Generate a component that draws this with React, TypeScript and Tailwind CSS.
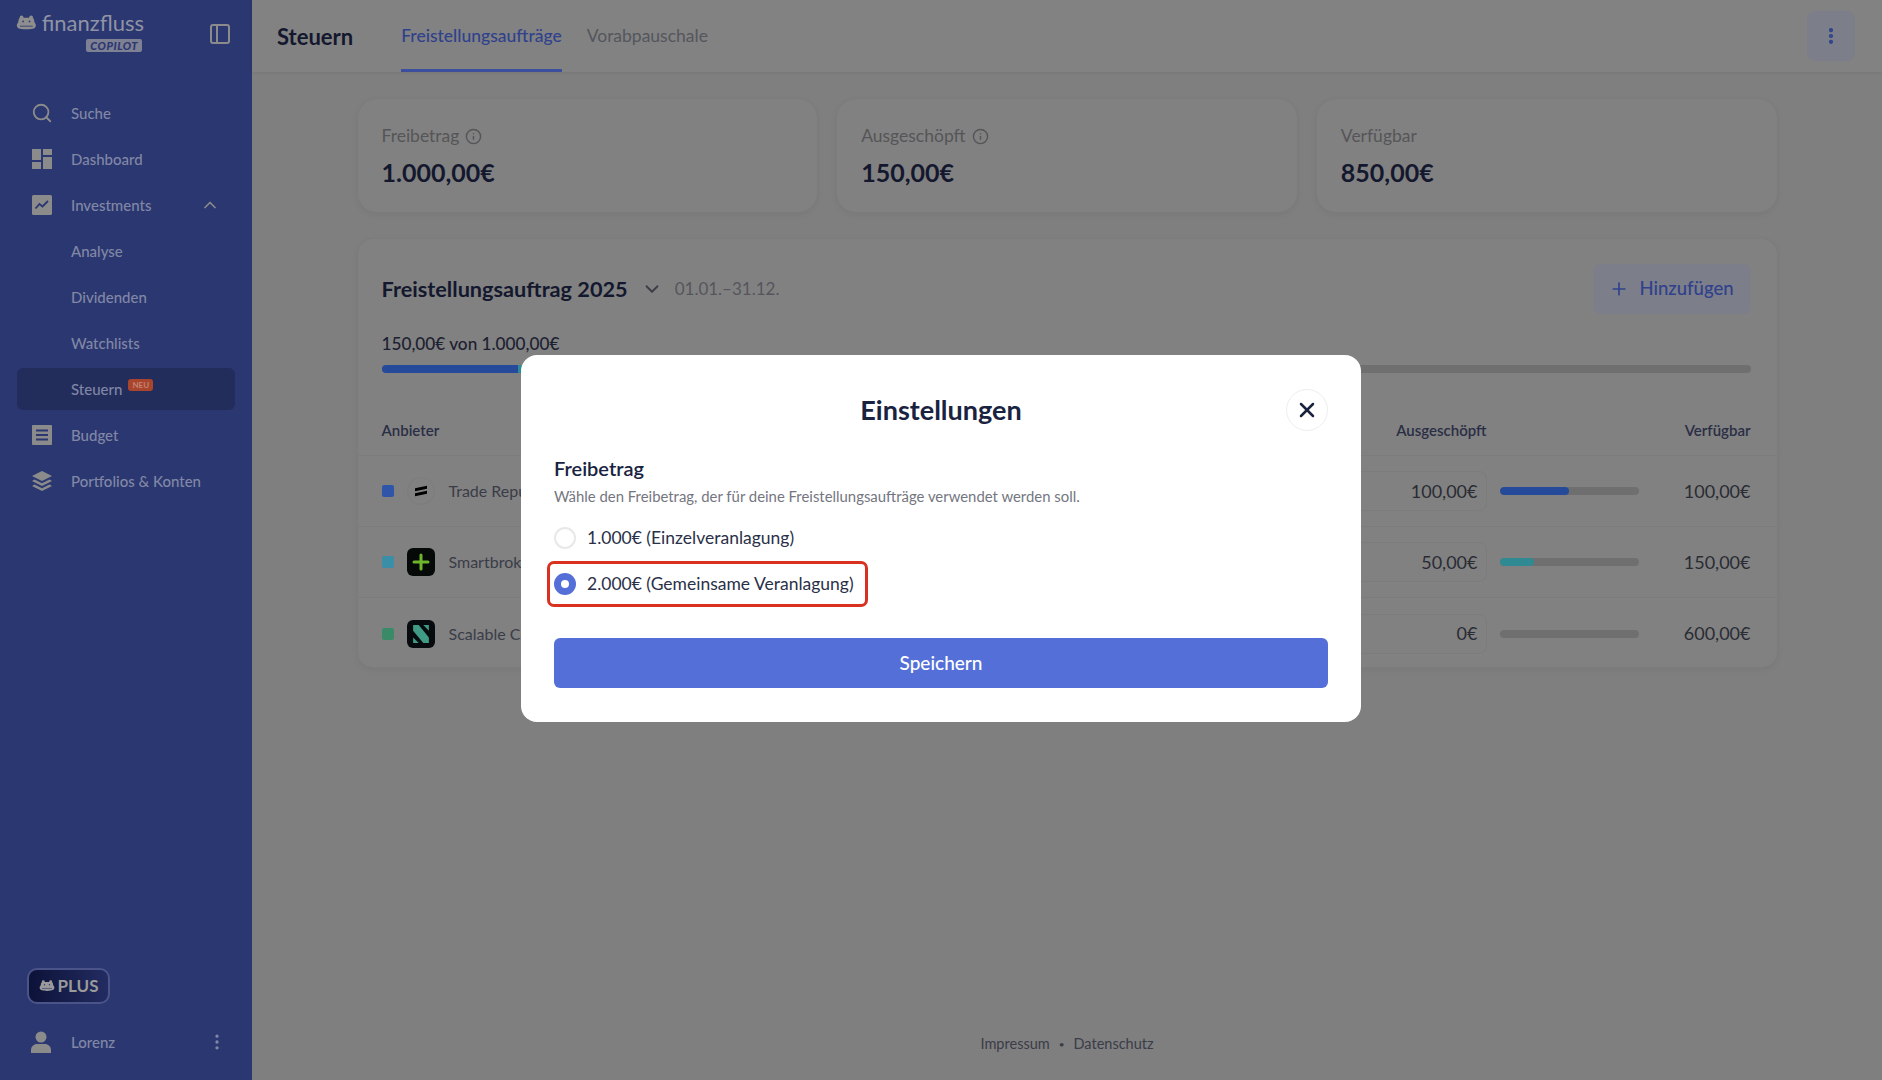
import { ChevronDown, ChevronUp, EllipsisVertical, Info, Plus, Search, X } from 'lucide-react'

const font = { fontFamily: 'Lato, "Noto Sans", sans-serif' }

function Hippo({ className }: { className?: string }) {
  return (
    <svg viewBox="0 0 26 20" className={className} fill="currentColor">
      <circle cx="7" cy="3" r="2.4" />
      <circle cx="19" cy="3" r="2.4" />
      <path d="M6 3.5h14c2 0 3 2 3 4.5 0 1.5 2 2.5 2 5 0 3-3 4.5-6 4.5-1 0-2 .5-6 .5s-5-.5-6-.5c-3 0-6-1.500-6-4.500 0-2.500 2-3.500 2-5C3 5.500 4 3.500 6 3.500z" />
      <circle cx="9" cy="8" r="1.100" fill="#2b3770" />
      <circle cx="17" cy="8" r="1.100" fill="#2b3770" />
      <path d="M5 14h16" stroke="#2b3770" strokeWidth="1" />
    </svg>
  )
}

function DashboardIcon() {
  return (
    <svg viewBox="0 0 20 20" className="w-5 h-5" fill="currentColor">
      <rect x="0" y="0" width="9" height="11" />
      <rect x="11" y="0" width="9" height="6" />
      <rect x="11" y="8" width="9" height="12" />
      <rect x="0" y="13" width="9" height="7" />
    </svg>
  )
}

function ChartIcon() {
  return (
    <svg viewBox="0 0 20 20" className="w-5 h-5">
      <rect width="20" height="20" rx="1.500" fill="currentColor" />
      <path d="M3.500 13.500l4-4.500 3 2.500 5.500-5.500" fill="none" stroke="#2b3770" strokeWidth="1.800" />
    </svg>
  )
}

function BudgetIcon() {
  return (
    <svg viewBox="0 0 20 20" className="w-5 h-5">
      <rect width="20" height="20" rx="1" fill="currentColor" />
      <path d="M4 5.500h12M4 10h12M4 14.500h12" stroke="#2b3770" strokeWidth="1.800" />
    </svg>
  )
}

function LayersIcon() {
  return (
    <svg viewBox="0 0 20 20" className="w-5 h-5" fill="currentColor">
      <path d="M10 0l10 5-10 5L0 5z" />
      <path d="M2.500 8.500L10 12.300l7.500-3.800L20 10l-10 5L0 10z" />
      <path d="M2.500 13.500L10 17.300l7.500-3.800L20 15l-10 5L0 15z" />
    </svg>
  )
}

function UserIcon() {
  return (
    <svg viewBox="0 0 20 22" className="w-5 h-[22px]" fill="currentColor">
      <circle cx="10" cy="6" r="5.500" />
      <path d="M0 22v-3c0-3.500 3-6 6-6h8c3 0 6 2.500 6 6v3z" />
    </svg>
  )
}

function NavItem({ icon, label, active, badge, trailing }: {
  icon?: React.ReactNode
  label: string
  active?: boolean
  badge?: boolean
  trailing?: React.ReactNode
}) {
  return (
    <div className={`flex items-center h-[42px] mb-1 rounded-md px-[15px] ${active ? 'bg-[#232d5c]' : ''}`}>
      <div className="w-[39px] flex justify-center pr-[19px] shrink-0 text-[#8b8b8b]">{icon}</div>
      <span className="text-[15px] font-medium text-[#8187a6]">{label}</span>
      {badge && (
        <span className="ml-[6px] -mt-[8px] rounded-[3px] bg-[#a8452c] px-1 text-[8px] font-bold leading-[12px] text-[#c48372]">NEU</span>
      )}
      {trailing && <div className="ml-auto text-[#8b8b8b]">{trailing}</div>}
    </div>
  )
}

function Sidebar() {
  return (
    <aside className="w-[252px] h-full shrink-0 bg-[#2b3770] flex flex-col">
      <div className="flex items-start h-[92px] pl-[16px] pr-[22px] pt-[11px]">
        <div className="w-[128px]">
          <div className="flex items-center gap-[5px] text-[#8e8e8e]">
            <Hippo className="w-[22px] h-[18px]" />
            <span className="text-[22px] leading-[24px] text-[#8f93a5]">finanzfluss</span>
          </div>
          <div className="flex justify-end mt-[4px] pr-[2px]">
            <span className="rounded-[2px] bg-[#7e8094] px-[4px] text-[11px] leading-[13px] font-black italic tracking-wider text-[#2b3770]">COPILOT</span>
          </div>
        </div>
        <div className="ml-auto mt-[13px] flex h-5 w-5 rounded-[3px] border-2 border-[#8b8b8b]">
          <div className="w-[6px] border-r-2 border-[#8b8b8b]" />
        </div>
      </div>
      <nav className="px-[17px]">
        <NavItem icon={<Search className="w-[22px] h-[22px] shrink-0" />} label="Suche" />
        <NavItem icon={<DashboardIcon />} label="Dashboard" />
        <NavItem icon={<ChartIcon />} label="Investments" trailing={<ChevronUp className="w-5 h-5" />} />
        <NavItem label="Analyse" />
        <NavItem label="Dividenden" />
        <NavItem label="Watchlists" />
        <NavItem label="Steuern" active badge />
        <NavItem icon={<BudgetIcon />} label="Budget" />
        <NavItem icon={<LayersIcon />} label="Portfolios & Konten" />
      </nav>
      <div className="mt-auto pl-[27px] pb-[24px]">
        <div className="flex items-center justify-center gap-[3px] h-[36px] w-[83px] rounded-[10px] border-2 border-[#4a5488] bg-gradient-to-r from-[#0c1238] to-[#232c62] text-[#9a9a9a]">
          <Hippo className="w-[16px] h-[14px]" />
          <span className="text-[17px] font-bold">PLUS</span>
        </div>
        <div className="flex items-center mt-[24px] h-[28px] pr-[25px]">
          <div className="w-[30px] flex justify-start pl-[4px] text-[#8b8b8b]"><UserIcon /></div>
          <span className="ml-[14px] text-[15px] font-medium text-[#8187a6]">Lorenz</span>
          <EllipsisVertical className="ml-auto w-5 h-5 text-[#8187a6]" />
        </div>
      </div>
    </aside>
  )
}

function StatCard({ label, value, info }: { label: string; value: string; info?: boolean }) {
  return (
    <div className="flex-1 h-[115px] rounded-[20px] bg-[#818181] border border-[#7c7c7c] shadow-[0_2px_6px_rgba(0,0,0,0.05)] px-[24px] pt-[27px]">
      <div className="flex items-center gap-[6px] text-[17.500px] leading-[20px] text-[#555558]">
        {label}
        {info && <Info className="w-[17px] h-[17px]" />}
      </div>
      <div className="mt-[11px] text-[25px] leading-[30px] font-bold text-[#14182e]">{value}</div>
    </div>
  )
}

function ProviderLogo({ kind }: { kind: string }) {
  if (kind === 'tr') {
    return (
      <div className="w-[28px] h-[28px] rounded-full border border-[#7c7c7c] flex items-center justify-center">
        <div className="w-[12px] h-[8px] flex flex-col justify-between">
          <div className="h-[3px] bg-black -skew-y-12" />
          <div className="h-[3px] bg-black -skew-y-12" />
        </div>
      </div>
    )
  }
  if (kind === 'sb') {
    return (
      <div className="w-[28px] h-[28px] rounded-[6px] bg-[#050a08] flex items-center justify-center">
        <Plus className="w-[24px] h-[24px] text-[#6fb52c]" strokeWidth={3} />
      </div>
    )
  }
  return (
    <div className="w-[28px] h-[28px] rounded-[6px] bg-[#070b0d] flex items-center justify-center">
      <svg viewBox="0 0 16 16" className="w-[18px] h-[18px]" fill="#3f9a86">
        <path d="M1 0h5l9 11v5h-5L1 5z" />
        <path d="M10 0h5v5zM1 11l5 5H1z" />
      </svg>
    </div>
  )
}

const rows = [
  { name: 'Trade Republic', color: 'bg-[#2f55a8]', logo: 'tr', value: '100,00€', left: '100,00€', fill: 'w-[50%] bg-[#254a9a]' },
  { name: 'Smartbroker+', color: 'bg-[#3a8ea8]', logo: 'sb', value: '50,00€', left: '150,00€', fill: 'w-[25%] bg-[#2f8a94]' },
  { name: 'Scalable Capital', color: 'bg-[#3a8a68]', logo: 'sc', value: '0€', left: '600,00€', fill: 'w-0' },
]

function Modal() {
  return (
    <div className="absolute inset-0 flex items-center justify-center pb-[3px]">
      <div className="w-[840px] h-[367px] rounded-[16px] bg-white px-[33px] pt-[35px]">
        <div className="relative flex items-center justify-center h-[40px]">
          <h2 className="text-[27px] font-bold text-[#19233f]">Einstellungen</h2>
          <button className="absolute right-0 top-[-1px] flex h-[42px] w-[42px] items-center justify-center rounded-full border border-[#eeeeee] text-[#19233f]">
            <X className="w-[24px] h-[24px]" strokeWidth={2.500} />
          </button>
        </div>
        <div className="mt-[26px] text-[20px] leading-[24px] font-semibold text-[#19233f]">Freibetrag</div>
        <p className="mt-[6px] text-[14.900px] leading-[20px] text-[#74767f]">
          Wähle den Freibetrag, der für deine Freistellungsaufträge verwendet werden soll.
        </p>
        <div className="mt-[20px] flex items-center h-[24px]">
          <span className="w-[22px] h-[22px] rounded-full border-2 border-[#e8e8e8]" />
          <span className="ml-[11px] text-[17.500px] text-[#2a3048]">1.000€ (Einzelveranlagung)</span>
        </div>
        <div className="relative mt-[22px] flex items-center h-[24px]">
          <span className="flex items-center justify-center w-[22px] h-[22px] rounded-full bg-[#5470d8]">
            <span className="w-[8px] h-[8px] rounded-full bg-white" />
          </span>
          <span className="ml-[11px] text-[17.500px] text-[#2a3048]">2.000€ (Gemeinsame Veranlagung)</span>
          <div className="absolute left-[-7px] top-[-11px] w-[321px] h-[46px] rounded-[7px] border-[3px] border-[#d9301f]" />
        </div>
        <button className="mt-[42px] w-full h-[50px] rounded-[6px] bg-[#5470d8] text-[19px] font-medium text-white">
          Speichern
        </button>
      </div>
    </div>
  )
}

export default function App() {
  return (
    <div className="relative flex w-full h-screen overflow-hidden bg-[#7f7f7f]" style={font}>
      <Sidebar />
      <main className="flex-1 flex flex-col min-w-0">
        <header className="flex items-center h-[72px] shrink-0 bg-[#828282] shadow-[0_1px_3px_rgba(0,0,0,0.08)] pl-[25px] pr-[27px]">
          <h1 className="text-[22px] font-bold text-[#14182e]">Steuern</h1>
          <div className="flex h-full ml-[48px] gap-[25px]">
            <div className="flex items-center border-b-[3px] border-[#3b4f9e] pt-[3px] text-[17.500px] font-medium text-[#2f418c]">Freistellungsaufträge</div>
            <div className="flex items-center border-b-[3px] border-transparent pt-[3px] text-[17.500px] text-[#54565c]">Vorabpauschale</div>
          </div>
          <button className="ml-auto flex h-[50px] w-[48px] items-center justify-center rounded-lg bg-[#7c7e8a] text-[#2f418c]">
            <EllipsisVertical className="w-5 h-5" strokeWidth={3} />
          </button>
        </header>

        <div className="w-[1421px] mx-auto pt-[26px]">
          <div className="flex gap-[18px]">
            <StatCard label="Freibetrag" value="1.000,00€" info />
            <StatCard label="Ausgeschöpft" value="150,00€" info />
            <StatCard label="Verfügbar" value="850,00€" />
          </div>

          <section className="mt-[25px] h-[430px] rounded-[16px] bg-[#818181] border border-[#7c7c7c] shadow-[0_2px_6px_rgba(0,0,0,0.05)]">
            <div className="flex items-center h-[50px] mt-[25px] pl-[24px] pr-[26px]">
              <h2 className="text-[21.700px] font-bold text-[#14182e]">Freistellungsauftrag 2025</h2>
              <ChevronDown className="ml-[13px] w-[22px] h-[22px] text-[#3a3c48]" />
              <span className="ml-[12px] text-[17px] text-[#54565c]">01.01.–31.12.</span>
              <button className="ml-auto flex items-center gap-[10px] h-[50px] w-[158px] justify-center rounded-lg bg-[#7c7e8a] text-[18.500px] font-medium text-[#2f418c]">
                <Plus className="w-[20px] h-[20px]" />
                Hinzufügen
              </button>
            </div>
            <div className="pl-[24px] pr-[26px] mt-[19px]">
              <div className="text-[17.200px] leading-[22px] font-medium text-[#1c2030]">150,00€ von 1.000,00€</div>
              <div className="mt-[10px] h-[8px] rounded-full bg-[#6f6f6f] overflow-hidden flex">
                <div className="w-[10%] bg-[#254a9a]" />
                <div className="w-[5%] bg-[#2f8a94]" />
              </div>
            </div>
            <div className="mt-[42px] flex items-center h-[30px] pl-[24px] pr-[26px] text-[15px] font-semibold text-[#2a2e45] border-b border-[#7c7c7c] box-content pb-[10px]">
              <span>Anbieter</span>
              <span className="ml-auto w-[150px] text-right">Ausgeschöpft</span>
              <span className="w-[264px] text-right">Verfügbar</span>
            </div>
            {rows.map((row, i) => (
              <div key={row.name} className={`flex items-center h-[71px] pl-[24px] pr-[26px] ${i < 2 ? 'border-b border-[#7c7c7c]' : ''}`}>
                <span className={`w-[12px] h-[12px] rounded-[2px] ${row.color}`} />
                <div className="ml-[13px]"><ProviderLogo kind={row.logo} /></div>
                <span className="ml-[14px] text-[16px] text-[#3a3c48]">{row.name}</span>
                <div className="ml-auto flex h-[40px] w-[150px] items-center justify-end rounded-lg border border-[#7c7c7c] pr-[8px] text-[18px] text-[#2a2c34]">
                  {row.value}
                </div>
                <div className="ml-[13px] h-[8px] w-[139px] rounded-full bg-[#6f6f6f] overflow-hidden">
                  <div className={`h-full rounded-full ${row.fill}`} />
                </div>
                <span className="w-[112px] text-right text-[18px] text-[#2a2c34]">{row.left}</span>
              </div>
            ))}
          </section>
        </div>

        <footer className="mt-auto pb-[25px] flex items-center justify-center gap-[9px] text-[14.500px] text-[#3a3c48]">
          <span>Impressum</span>
          <span className="text-[10px]">•</span>
          <span>Datenschutz</span>
        </footer>
      </main>
      <Modal />
    </div>
  )
}
